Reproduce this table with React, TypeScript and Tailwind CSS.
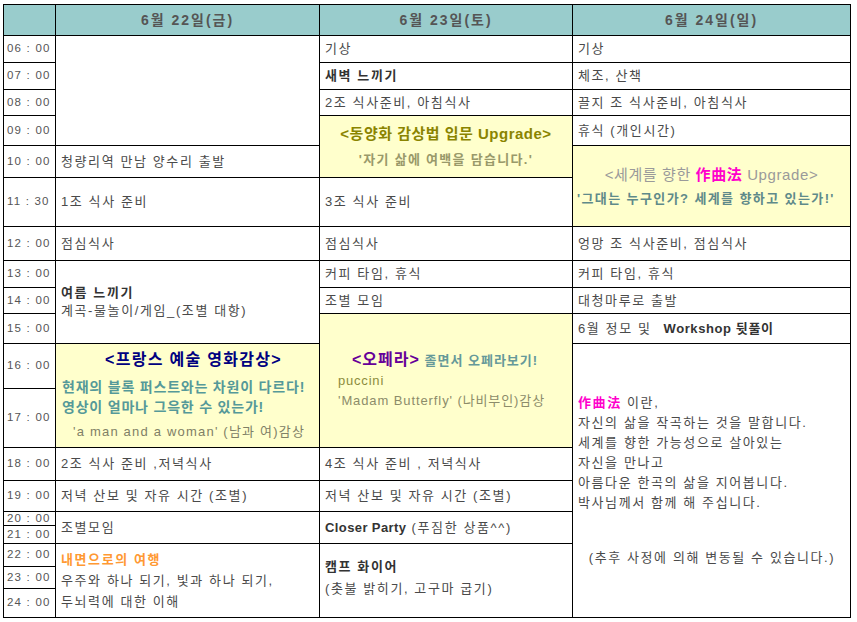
import React from "react";

const font = "font-['Liberation_Sans','Noto_Sans_CJK_KR',sans-serif]";
const cell = "bg-white flex items-center pl-[5px] text-[13px] tracking-[1.6px] text-[#4a4a4a] whitespace-nowrap overflow-hidden";
const yellow = "bg-[#ffffcc] flex flex-col justify-center whitespace-nowrap overflow-hidden tracking-[1px]";
const tcell = "bg-white flex items-center pl-[3px] text-[11.5px] leading-none tracking-[1.2px] text-[#555] whitespace-nowrap overflow-hidden";
const head = "bg-[#99cccc] flex items-center justify-center text-[14px] font-bold tracking-[2px] text-[#555]";

function T({ t }: { t: string }) {
  return <div className={tcell}>{t}</div>;
}

export default function App() {
  return (
    <div className={`${font} bg-white w-[857px] h-[622px] pt-[4px] pl-[3px]`}>
      <div className="grid w-fit bg-black p-px gap-px grid-cols-[51px_263px_252px_277px] grid-rows-[30px_26px_26px_25px_29px_31px_48px_33px_26px_25px_29px_44px_58px_32px_30px_13px_17px_22px_21px_28px]">
        {/* header */}
        <div className="bg-[#99cccc]" />
        <div className={head}>6월 22일(금)</div>
        <div className={head}>6월 23일(토)</div>
        <div className={head}>6월 24일(일)</div>

        {/* 06 */}
        <T t="06 : 00" />
        <div className="bg-white row-span-4" />
        <div className={cell}>기상</div>
        <div className={cell}>기상</div>

        {/* 07 */}
        <T t="07 : 00" />
        <div className={`${cell} font-bold text-[#333]`}>새벽 느끼기</div>
        <div className={cell}>체조, 산책</div>

        {/* 08 */}
        <T t="08 : 00" />
        <div className={cell}>2조 식사준비, 아침식사</div>
        <div className={cell}>끌지 조 식사준비, 아침식사</div>

        {/* 09 */}
        <T t="09 : 00" />
        <div className={`${yellow} row-span-2 items-center gap-[9px]`}>
          <div className="text-[15px] font-bold text-[#8a8400] leading-[18px] tracking-[0.5px]">&lt;동양화 감상법 입문 Upgrade&gt;</div>
          <div className="text-[13px] font-bold text-[#99996a] leading-[16px] tracking-[1.3px]">'자기 삶에 여백을 담습니다.'</div>
        </div>
        <div className={cell}>휴식 (개인시간)</div>

        {/* 10 */}
        <T t="10 : 00" />
        <div className={cell}>청량리역 만남 양수리 출발</div>
        <div className={`${yellow} row-span-2 gap-[7px]`}>
          <div className="text-[15px] text-[#9a9a9a] leading-[18px] text-center tracking-[0.6px]">
            &lt;세계를 향한 <span className="font-bold text-[#ff00cc]">作曲法</span> Upgrade&gt;
          </div>
          <div className="text-[13px] font-bold text-[#5f8a8a] leading-[16px] pl-[4px] tracking-[1.4px]">'그대는 누구인가? 세계를 향하고 있는가!'</div>
        </div>

        {/* 11:30 */}
        <T t="11 : 30" />
        <div className={cell}>1조 식사 준비</div>
        <div className={cell}>3조 식사 준비</div>

        {/* 12 */}
        <T t="12 : 00" />
        <div className={cell}>점심식사</div>
        <div className={cell}>점심식사</div>
        <div className={cell}>엉망 조 식사준비, 점심식사</div>

        {/* 13 */}
        <T t="13 : 00" />
        <div className={`${cell} row-span-3 flex-col items-start justify-center leading-[18px]`}>
          <div className="font-bold text-[#333]">여름 느끼기</div>
          <div>계곡-물놀이/게임_(조별 대항)</div>
        </div>
        <div className={cell}>커피 타임, 휴식</div>
        <div className={cell}>커피 타임, 휴식</div>

        {/* 14 */}
        <T t="14 : 00" />
        <div className={cell}>조별 모임</div>
        <div className={cell}>대청마루로 출발</div>

        {/* 15 */}
        <T t="15 : 00" />
        <div className={`${yellow} row-span-3 pl-[18px] leading-[20px]`}>
          <div className="pl-[14px]">
            <span className="text-[16px] font-bold text-[#660099]">&lt;오페라&gt;</span>
            <span className="text-[13px] font-bold text-[#669999]"> 졸면서 오페라보기!</span>
          </div>
          <div className="text-[13px] text-[#8c8c3c] tracking-[0.8px]">puccini</div>
          <div className="text-[13px] text-[#8c8c6a] tracking-[0.9px]">'Madam Butterfly' (나비부인)감상</div>
        </div>
        <div className={cell}>
          6월 정모 및<span className="ml-[12px] font-bold text-[#333] tracking-[0.6px]">Workshop 뒷풀이</span>
        </div>

        {/* 16 */}
        <T t="16 : 00" />
        <div className={`${yellow} row-span-2 pl-[6px]`}>
          <div className="pl-[43px] text-[16px] font-bold text-[#000080] leading-[20px] tracking-[1.3px]">&lt;프랑스 예술 영화감상&gt;</div>
          <div className="mt-[7px] text-[14px] font-bold text-[#559999] leading-[20px] tracking-[0.8px]">현재의 블록 퍼스트와는 차원이 다르다!</div>
          <div className="text-[14px] font-bold text-[#559999] leading-[20px] tracking-[0.8px]">영상이 얼마나 그윽한 수 있는가!</div>
          <div className="mt-[5px] pl-[11px] text-[13px] text-[#808066] leading-[20px] tracking-[1.2px]">'a man and a woman' (남과 여)감상</div>
        </div>
        <div className={`${cell} row-span-9 flex-col items-stretch justify-center leading-[20px]`}>
          <div>
            <span className="font-bold text-[#ff00cc]">作曲法</span> 이란,
          </div>
          <div>자신의 삶을 작곡하는 것을 말합니다.</div>
          <div>세계를 향한 가능성으로 살아있는</div>
          <div>자신을 만나고</div>
          <div>아름다운 한곡의 삶을 지어봅니다.</div>
          <div>박사님께서 함께 해 주십니다.</div>
          <div className="mt-[35px] text-center pr-[4px]">(추후 사정에 의해 변동될 수 있습니다.)</div>
        </div>

        {/* 17 */}
        <T t="17 : 00" />

        {/* 18 */}
        <T t="18 : 00" />
        <div className={cell}>2조 식사 준비 ,저녁식사</div>
        <div className={cell}>4조 식사 준비 , 저녁식사</div>

        {/* 19 */}
        <T t="19 : 00" />
        <div className={cell}>저녁 산보 및 자유 시간 (조별)</div>
        <div className={cell}>저녁 산보 및 자유 시간 (조별)</div>

        {/* 20 */}
        <T t="20 : 00" />
        <div className={`${cell} row-span-2`}>조별모임</div>
        <div className={`${cell} row-span-2`}>
          <span className="font-bold text-[#333] tracking-[0.4px]">Closer Party</span>&nbsp;(푸짐한 상품^^)
        </div>

        {/* 21 */}
        <T t="21 : 00" />

        {/* 22 */}
        <T t="22 : 00" />
        <div className={`${cell} row-span-3 flex-col items-start justify-center leading-[21px]`}>
          <div className="font-bold text-[#ff9933]">내면으로의 여행</div>
          <div>우주와 하나 되기, 빛과 하나 되기,</div>
          <div>두뇌력에 대한 이해</div>
        </div>
        <div className={`${cell} row-span-3 flex-col items-start justify-center leading-[22px] pb-[6px]`}>
          <div className="font-bold text-[#333]">캠프 화이어</div>
          <div>(촛불 밝히기, 고구마 굽기)</div>
        </div>

        {/* 23 */}
        <T t="23 : 00" />

        {/* 24 */}
        <T t="24 : 00" />
      </div>
    </div>
  );
}
